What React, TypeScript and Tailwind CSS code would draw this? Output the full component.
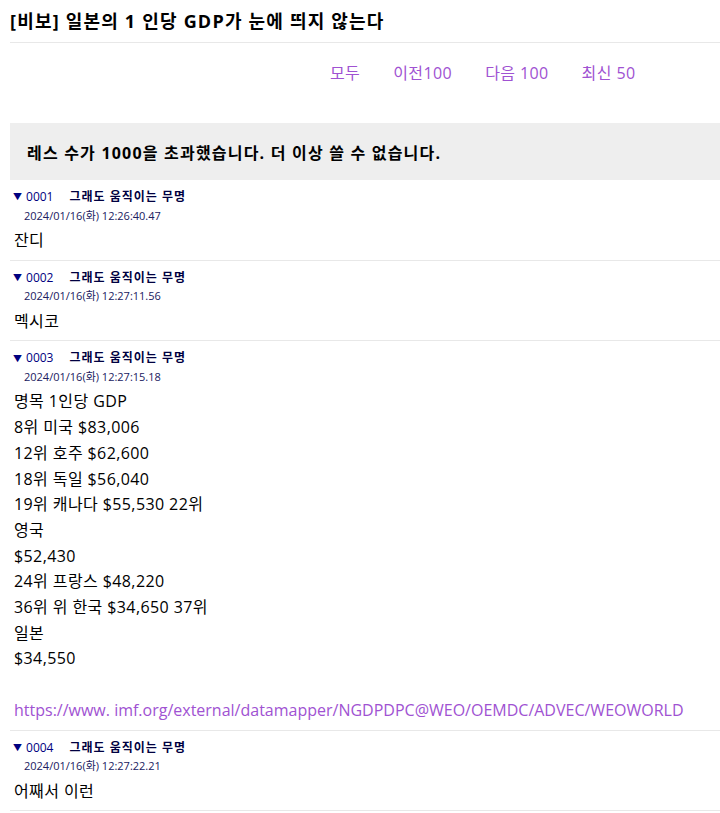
import React from "react";

const FONT = { fontFamily: '"Open Sans", "Noto Sans CJK KR", sans-serif' };

type Post = { no: string; name: string; date: string; lines: React.ReactNode[] };

const posts: Post[] = [
  { no: "0001", name: "그래도 움직이는 무명", date: "2024/01/16(화) 12:26:40.47", lines: ["잔디"] },
  { no: "0002", name: "그래도 움직이는 무명", date: "2024/01/16(화) 12:27:11.56", lines: ["멕시코"] },
  {
    no: "0003",
    name: "그래도 움직이는 무명",
    date: "2024/01/16(화) 12:27:15.18",
    lines: [
      "명목 1인당 GDP",
      "8위 미국 $83,006",
      "12위 호주 $62,600",
      "18위 독일 $56,040",
      "19위 캐나다 $55,530 22위",
      "영국",
      "$52,430",
      "24위 프랑스 $48,220",
      "36위 위 한국 $34,650 37위",
      "일본",
      "$34,550",
      "\u00a0",
      <a key="l" className="text-[#a052d2] tracking-normal">
        https://www. imf.org/external/datamapper/NGDPDPC@WEO/OEMDC/ADVEC/WEOWORLD
      </a>,
    ],
  },
  { no: "0004", name: "그래도 움직이는 무명", date: "2024/01/16(화) 12:27:22.21", lines: ["어째서 이런"] },
];

export default function App() {
  return (
    <div className="bg-white text-black min-h-[813px] overflow-hidden" style={FONT}>
      <div className="ml-[10px]">
        <h1 className="pt-[8px] pb-[8px] text-[18px] leading-[26px] font-bold tracking-[1.2px] border-b border-[#e8e8e8] whitespace-nowrap">
          [비보] 일본의 1 인당 GDP가 눈에 띄지 않는다
        </h1>
        <nav className="flex gap-[33px] pl-[320px] pt-[17px] h-[80px] text-[16px] leading-[26px] tracking-[0.4px] text-[#a052d2] whitespace-nowrap">
          <a>모두</a>
          <a>이전100</a>
          <a>다음 100</a>
          <a>최신 50</a>
        </nav>
        <div className="h-[57px] bg-[#eeeeee] flex items-center pl-[17px] pt-[3px] text-[16px] font-bold tracking-[1.2px] whitespace-nowrap">
          레스 수가 1000을 초과했습니다. 더 이상 쓸 수 없습니다.
        </div>
        {posts.map((p) => (
          <div key={p.no} className="border-b border-[#e8e8e8] pt-[8px] pb-[6px]">
            <div className="h-[18px] flex items-center text-[12px] text-[#000080] whitespace-nowrap">
              <span className="ml-[3px] text-[9px] mr-[4px]">▼</span>
              <span>{p.no}</span>
              <span className="ml-[16px] font-bold tracking-[1px] text-[#000040]">{p.name}</span>
            </div>
            <div className="h-[20px] flex items-center pl-[14px] text-[11px] text-[#202060] whitespace-nowrap">
              {p.date}
            </div>
            <div className="pt-[2px] pl-[4px] text-[16px] leading-[25.7px] tracking-[0.4px] whitespace-nowrap">
              {p.lines.map((l, i) => (
                <div key={i}>{l}</div>
              ))}
            </div>
          </div>
        ))}
      </div>
    </div>
  );
}
